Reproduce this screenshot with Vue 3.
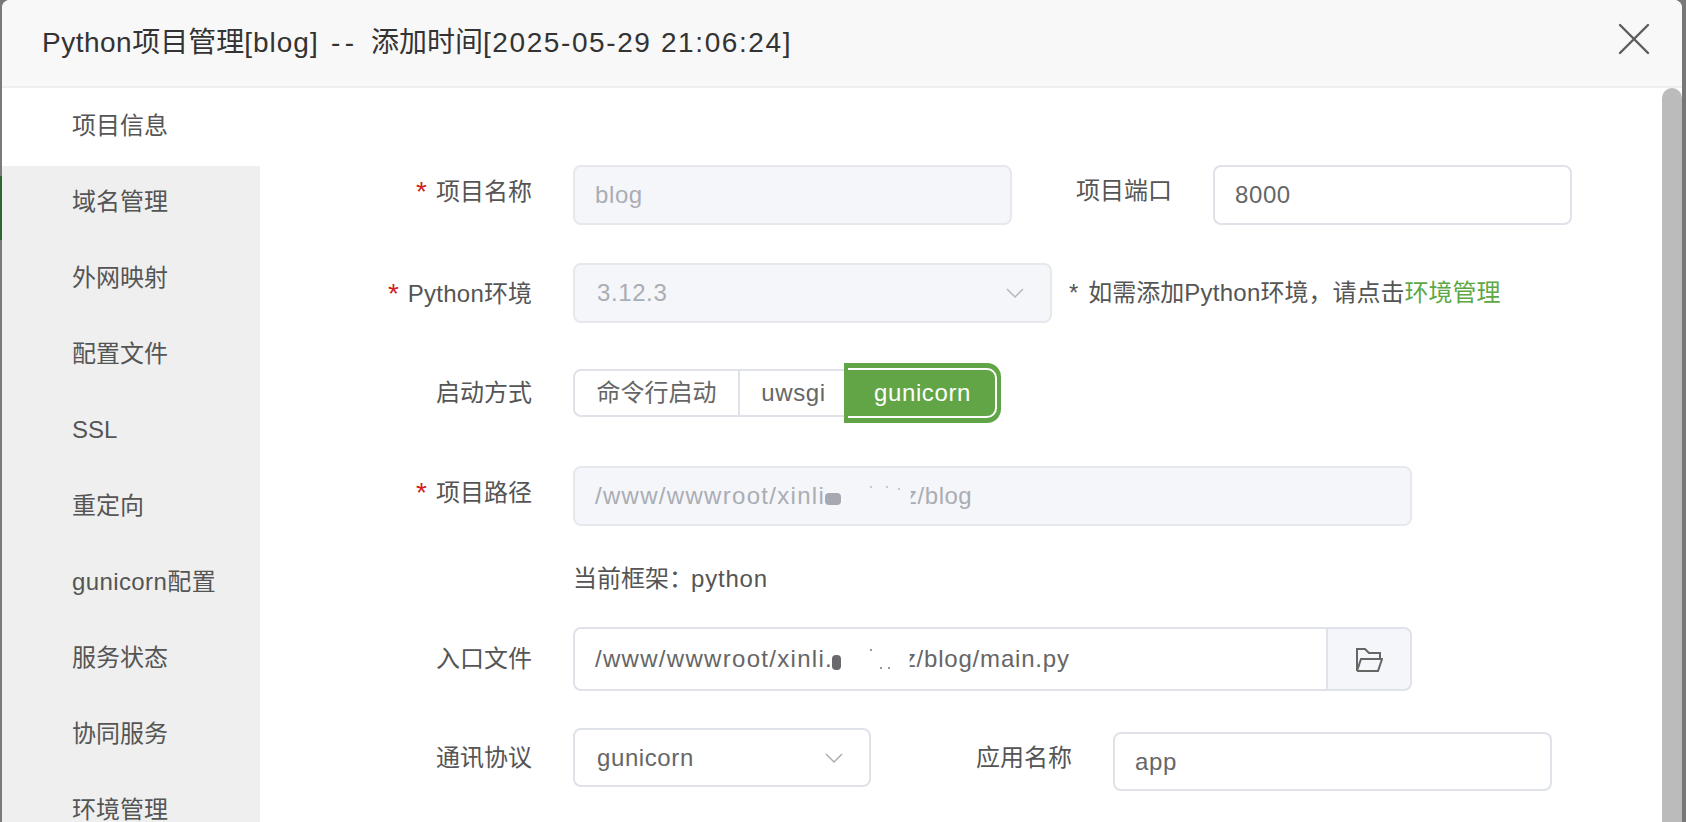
<script setup>
const menu = ['项目信息', '域名管理', '外网映射', '配置文件', 'SSL', '重定向', 'gunicorn配置', '服务状态', '协同服务', '环境管理']
</script>

<template>
  <div class="page">
    <div class="left-strip"><span class="green-patch"></span></div>
    <div class="modal">
      <header class="head">
        <h1 class="title"><span class="t-a">Python</span>项目管理<span class="t-b">[blog]</span><span class="t-c"> -- </span>添加时间<span class="t-d">[2025-05-29 21:06:24]</span></h1>
        <svg class="close" width="32" height="32" viewBox="0 0 32 32" aria-label="关闭">
          <path d="M2 2 L30 30 M30 2 L2 30" fill="none" stroke="#5c5c5c" stroke-width="2.4" stroke-linecap="round" />
        </svg>
      </header>
      <div class="body">
        <nav class="side">
          <div v-for="(m, i) in menu" :key="m" class="item" :class="{ active: i === 0, wide: i === 6 }">{{ m }}</div>
        </nav>
        <main class="form">
          <div class="row r1">
            <div class="label up"><i>*</i>项目名称</div>
            <div class="field disabled w-name"><span class="ls">blog</span></div>
            <div class="label2 up">项目端口</div>
            <div class="field w-port"><span class="ls-d">8000</span></div>
          </div>

          <div class="row r2">
            <div class="label"><i>*</i><span class="ls-t">Python</span>环境</div>
            <div class="field disabled select w-env">
              <span class="ls">3.12.3</span>
              <svg class="chev" width="20" height="12" viewBox="0 0 20 12"><path d="M2 2 L10 10 L18 2" fill="none" stroke="#b4b7bd" stroke-width="1.5" /></svg>
            </div>
            <div class="hint"><span class="hint-star">*</span>如需添加<span class="ls-t">Python</span>环境，请点击<a class="link">环境管理</a></div>
          </div>

          <div class="row r3">
            <div class="label">启动方式</div>
            <div class="radios">
              <div class="radio first">命令行启动</div>
              <div class="radio second"><span class="ls">uwsgi</span></div>
              <div class="radio on"><span class="on-inner"><span class="ls">gunicorn</span></span></div>
            </div>
          </div>

          <div class="row r4">
            <div class="label up"><i>*</i>项目路径</div>
            <div class="field disabled w-path">
              <span class="ls-path">/www/wwwroot/xinli</span><span class="blob"></span><span class="gap"></span><span class="cut">z</span><span class="ls-s">/blog</span>
            </div>
          </div>

          <div class="row r5">
            <div class="label"></div>
            <div class="note">当前框架：<span class="ls-py">python</span></div>
          </div>

          <div class="row r6">
            <div class="label">入口文件</div>
            <div class="group">
              <div class="field in-group">
                <span class="ls-path">/www/wwwroot/xinli.</span><span class="blob dark"></span><span class="gap white"></span><span class="cut">z</span><span class="ls-m">/blog/main.py</span>
              </div>
              <div class="addon">
                <svg width="27" height="24" viewBox="0 0 27 24">
                  <path d="M1 23 V1 H9 L13 5 H24 V11 M1 23 H22 L26 11 H5 L1 23" fill="none" stroke="#666" stroke-width="2" />
                </svg>
              </div>
            </div>
          </div>

          <div class="row r7">
            <div class="label">通讯协议</div>
            <div class="field select w-proto">
              <span class="ls">gunicorn</span>
              <svg class="chev" width="20" height="12" viewBox="0 0 20 12"><path d="M2 2 L10 10 L18 2" fill="none" stroke="#a9acb2" stroke-width="1.5" /></svg>
            </div>
            <div class="label3">应用名称</div>
            <div class="field w-app"><span class="ls">app</span></div>
          </div>
        </main>
        <div class="scroll"></div>
      </div>
    </div>
    <div class="right-strip"></div>
  </div>
</template>

<style>
html, body { margin: 0; overflow: hidden; }
</style>

<style scoped>
.page {
  width: 1686px;
  height: 822px;
  display: flex;
  overflow: hidden;
  background: #777;
  font-family: "Liberation Sans", "Noto Sans CJK SC", sans-serif;
  font-size: 24px;
  color: #555;
}
.left-strip { width: 2px; flex: none; padding-top: 176px; background: #7a7a7a; }
.green-patch { display: block; width: 2px; height: 64px; background: #2f662f; }
.right-strip { width: 4px; flex: none; background: #777; }
.modal { width: 1680px; height: 822px; flex: none; display: flex; flex-direction: column; background: #fff; border-radius: 8px 8px 0 0; overflow: hidden; }
.head {
  height: 86px;
  flex: none;
  display: flex;
  align-items: center;
  justify-content: space-between;
  background: #f8f8f8;
  border-bottom: 2px solid #eee;
  padding: 0 32px 0 40px;
}
.title { margin: -6px 0 0; font-size: 28px; font-weight: 400; color: #333; white-space: pre; }
.t-a { letter-spacing: 0.5px; }
.t-b { letter-spacing: 1px; }
.t-c { letter-spacing: 4.5px; }
.t-d { letter-spacing: 1.6px; }
.close { margin-top: -8px; }
.body { flex: 1; display: flex; min-height: 0; }
.side { width: 258px; flex: none; background: #efefef; overflow: hidden; }
.item { height: 76px; line-height: 72px; padding-left: 70px; color: #555; white-space: nowrap; }
.item.active { background: #fff; height: 78px; line-height: 76px; }
.item.wide { letter-spacing: 0.4px; }
.form { flex: 1; padding-top: 77px; min-width: 0; }
.row { display: flex; align-items: flex-start; }
.r2 { margin-top: 38px; }
.r3 { margin-top: 40px; }
.r4 { margin-top: 43px; }
.r5 { margin-top: 36px; }
.r6 { margin-top: 31px; }
.r7 { margin-top: 37px; }
.ls { letter-spacing: 0.6px; }
.ls-t { letter-spacing: 0.25px; }
.ls-d { letter-spacing: 0.6px; }
.ls-path { letter-spacing: 1.3px; }
.ls-s { letter-spacing: 0.5px; }
.ls-m { letter-spacing: 0.8px; }
.ls-py { letter-spacing: 0.8px; margin-left: -2px; }
.label { width: 272px; margin-right: 41px; flex: none; text-align: right; height: 60px; line-height: 60px; white-space: nowrap; }
.label i { color: #d01f1f; font-style: normal; font-size: 28px; margin-right: 9px; position: relative; top: 1px; }
.r3 .label { line-height: 60px; }
.r6 .label { height: 64px; line-height: 64px; }
.r7 .label { height: 59px; line-height: 60px; }
.r5 .label { height: 34px; }
.label.up { line-height: 52px; }
.label2 { margin-left: 64px; width: 93px; margin-right: 44px; height: 60px; line-height: 52px; white-space: nowrap; flex: none; }
.label3 { margin-left: 105px; width: 95px; margin-right: 42px; height: 59px; line-height: 60px; white-space: nowrap; flex: none; }
.field {
  box-sizing: border-box;
  height: 60px;
  flex: none;
  display: flex;
  align-items: center;
  border: 2px solid #dfe2e8;
  border-radius: 8px;
  padding-left: 20px;
  background: #fff;
  color: #666;
  white-space: nowrap;
}
.disabled { background: #f5f6fa; border-color: #e6e8ed; color: #aaadb3; }
.select { justify-content: space-between; padding-right: 25px; padding-left: 22px; }
.w-name { width: 439px; }
.w-port { width: 359px; }
.w-env { width: 479px; }
.hint { margin-left: 17px; line-height: 60px; white-space: nowrap; }
.hint-star { margin-right: 10px; }
.link { color: #5da845; }
.radios { display: flex; align-items: center; height: 60px; }
.radio { box-sizing: border-box; height: 48px; line-height: 44px; border: 2px solid #dfe2e8; background: #fff; color: #666; }
.first { width: 167px; border-radius: 8px 0 0 8px; text-align: center; }
.second { width: 104px; border-left: 0; border-right: 0; text-align: center; padding-left: 3px; }
.on { box-sizing: border-box; width: 157px; height: 60px; border: 0; padding: 5px 4px 5px 4px; background: #62a547; border-radius: 0 14px 14px 0; }
.on-inner { display: block; box-sizing: border-box; height: 50px; line-height: 46px; padding-left: 2px; text-align: center; color: #fff; border: 2px solid #fff; border-left: 0; border-radius: 0 10px 10px 0; }
.w-path { width: 839px; }
.note { height: 34px; line-height: 34px; white-space: nowrap; color: #555; }
.group { display: flex; width: 839px; height: 64px; box-sizing: border-box; }
.in-group { flex: 1; height: 64px; border-right: 2px solid #dfe2e8; border-radius: 8px 0 0 8px; }
.addon { box-sizing: border-box; width: 84px; height: 64px; flex: none; display: flex; align-items: center; justify-content: center; padding-top: 2px; background: #f5f6fa; border: 2px solid #dfe2e8; border-left: 0; border-radius: 0 8px 8px 0; }
.w-proto { width: 298px; height: 59px; }
.w-app { width: 439px; height: 59px; margin-top: 4px; }
.chev { flex: none; }
.blob { display: inline-block; width: 16px; height: 12px; margin-top: 6px; background: #a6a9b1; border-radius: 4px; filter: blur(0.6px); }
.blob.dark { width: 9px; height: 15px; background: #6a6a6e; margin-left: -1px; }
.gap {
  display: inline-block;
  width: 64px;
  height: 26px;
  background:
    radial-gradient(circle, #c8cad0 1px, transparent 1.5px) 26px 0 / 8px 8px no-repeat,
    radial-gradient(circle, #c8cad0 1px, transparent 1.5px) 42px 0 / 8px 8px no-repeat,
    radial-gradient(circle, #c8cad0 1px, transparent 1.5px) 54px 2px / 8px 8px no-repeat;
}
.gap.white {
  width: 63px;
  background:
    radial-gradient(circle, #999 1px, transparent 1.5px) 26px 0 / 8px 8px no-repeat,
    radial-gradient(circle, #999 1px, transparent 1.5px) 36px 18px / 8px 8px no-repeat,
    radial-gradient(circle, #999 1px, transparent 1.5px) 44px 18px / 8px 8px no-repeat;
}
.cut { clip-path: inset(0 0 0 45%); letter-spacing: 0.5px; }
.scroll { width: 20px; flex: none; background: #bbb; border-radius: 10px 10px 0 0; }
</style>
